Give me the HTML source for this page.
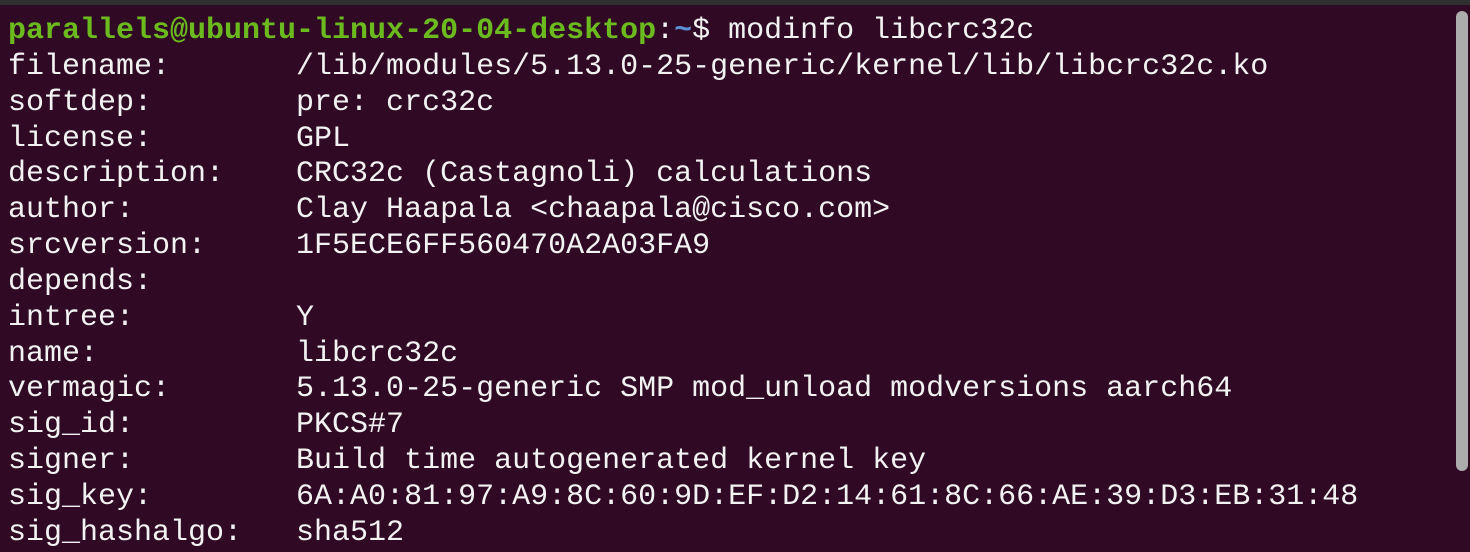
<!DOCTYPE html>
<html><head><style>
html,body{margin:0;padding:0;width:1470px;height:550px;overflow:hidden;background:#300a24;}
.top{position:absolute;left:0;top:0;width:1470px;height:5px;background:#2f2f2f;}
.sb{position:absolute;left:1456px;top:11px;width:12px;height:460px;background:#acacac;border-radius:6px;}
pre{position:absolute;left:8px;top:14px;margin:0;font-family:"Liberation Mono","DejaVu Sans Mono",monospace;font-size:30px;line-height:35.85px;color:#f2f2f2;white-space:pre;}
.g{color:#6cbb1e;font-weight:bold}.b{color:#5a8fd6;font-weight:bold}
</style></head><body>
<div class="top"></div>
<pre><span class="g">parallels@ubuntu-linux-20-04-desktop</span>:<span class="b">~</span>$ modinfo libcrc32c
filename:       /lib/modules/5.13.0-25-generic/kernel/lib/libcrc32c.ko
softdep:        pre: crc32c
license:        GPL
description:    CRC32c (Castagnoli) calculations
author:         Clay Haapala &lt;chaapala@cisco.com&gt;
srcversion:     1F5ECE6FF560470A2A03FA9
depends:        
intree:         Y
name:           libcrc32c
vermagic:       5.13.0-25-generic SMP mod_unload modversions aarch64
sig_id:         PKCS#7
signer:         Build time autogenerated kernel key
sig_key:        6A:A0:81:97:A9:8C:60:9D:EF:D2:14:61:8C:66:AE:39:D3:EB:31:48
sig_hashalgo:   sha512</pre>
<div class="sb"></div>
</body></html>
